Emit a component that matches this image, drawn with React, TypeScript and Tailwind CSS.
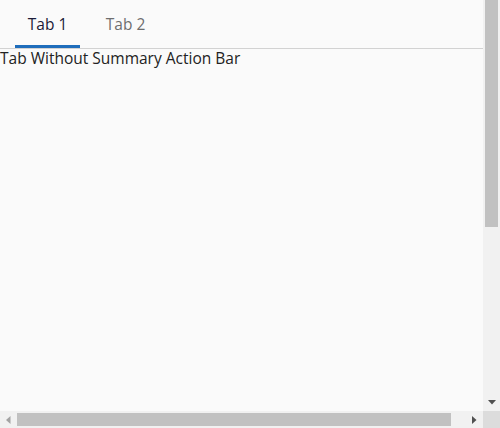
export default function App() {
  return (
    <div
      className="flex h-[428px] w-[500px] flex-col overflow-hidden bg-[#fafafa]"
      style={{ fontFamily: '"Open Sans", "Noto Sans", sans-serif' }}
    >
      <div className="flex min-h-0 flex-1">
        <div className="min-w-0 flex-1">
          <div className="flex border-b border-[#d2d2d2] pl-[15px]">
            <div className="flex h-[48px] w-[65px] items-center justify-center border-b-[3px] border-[#1f6dbb] pt-[4px] text-[15.5px] text-[#1b1b38]">
              Tab 1
            </div>
            <div className="ml-[13px] flex h-[48px] w-[65px] items-center justify-center border-b-[3px] border-transparent pt-[4px] text-[15.5px] text-[#6e6e6e]">
              Tab 2
            </div>
          </div>
          <div className="whitespace-nowrap text-[15.5px] leading-[18px] text-[#222]">Tab Without Summary Action Bar</div>
        </div>
        <div className="flex w-[17px] flex-col bg-[#f1f1f1]">
          <div className="mx-[2px] h-[227px] bg-[#c1c1c1]" />
          <div className="flex-1" />
          <div className="flex h-[17px] items-center justify-center">
            <svg width="8" height="5" viewBox="0 0 8 5">
              <path d="M0 0H8L4 4.5Z" fill="#505050" />
            </svg>
          </div>
        </div>
      </div>
      <div className="flex h-[17px]">
        <div className="flex flex-1 items-center bg-[#f1f1f1]">
          <div className="flex h-[17px] w-[17px] items-center justify-center">
            <svg width="5" height="8" viewBox="0 0 5 8">
              <path d="M4.5 0V8L0 4Z" fill="#a3a3a3" />
            </svg>
          </div>
          <div className="h-[13px] w-[434px] bg-[#c1c1c1]" />
          <div className="flex-1" />
          <div className="flex h-[17px] w-[17px] items-center justify-center">
            <svg width="5" height="8" viewBox="0 0 5 8">
              <path d="M0 0V8L4.5 4Z" fill="#505050" />
            </svg>
          </div>
        </div>
        <div className="w-[17px] bg-[#dcdcdc]" />
      </div>
    </div>
  );
}
